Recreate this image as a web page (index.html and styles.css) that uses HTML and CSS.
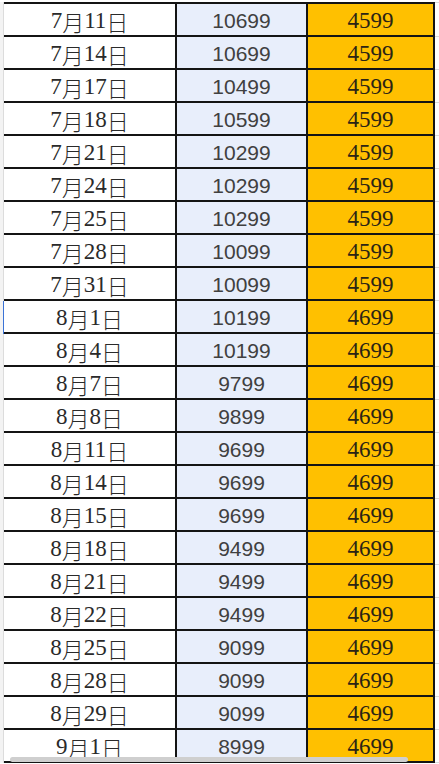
FILE: index.html
```html
<!DOCTYPE html>
<html lang="zh">
<head>
<meta charset="utf-8">
<title>Sheet</title>
<link rel="stylesheet" href="styles.css">
</head>
<body>
<div class="sheet">
  <div class="grid" id="grid"></div>
  <div class="hscroll"></div>
</div>
<script>
const rows = [
["7月11日","10699","4599"],["7月14日","10699","4599"],["7月17日","10499","4599"],
["7月18日","10599","4599"],["7月21日","10299","4599"],["7月24日","10299","4599"],
["7月25日","10299","4599"],["7月28日","10099","4599"],["7月31日","10099","4599"],
["8月1日","10199","4699"],["8月4日","10199","4699"],["8月7日","9799","4699"],
["8月8日","9899","4699"],["8月11日","9699","4699"],["8月14日","9699","4699"],
["8月15日","9699","4699"],["8月18日","9499","4699"],["8月21日","9499","4699"],
["8月22日","9499","4699"],["8月25日","9099","4699"],["8月28日","9099","4699"],
["8月29日","9099","4699"],["9月1日","8999","4699"]];
const g = document.getElementById('grid');
let html = '';
rows.forEach((r, i) => {
  const first = i === 0 ? ' first' : '';
  const sel = i === 9 ? ' sel' : '';
  const d = r[0].replace(/([月日])/g, '<span class="cj">$1</span>');
  html += '<div class="stub' + sel + first + '"></div>';
  html += '<div class="cell date' + first + '">' + d + '</div>';
  html += '<div class="cell price' + first + '">' + r[1] + '</div>';
  html += '<div class="cell fixed' + first + '">' + r[2] + '</div>';
  html += '<div class="edge' + first + '"></div>';
});
g.innerHTML = html;
</script>
</body>
</html>
```
FILE: styles.css
```css
html, body {
  margin: 0;
  padding: 0;
  background: #ffffff;
  overflow: hidden;
}
.sheet {
  position: relative;
  width: 439px;
  height: 764px;
  overflow: hidden;
}
.grid {
  display: grid;
  grid-template-columns: 4px 173px 131px 127px 4px;
  padding-top: 2px;
}
.stub {
  height: 33px;
  box-sizing: border-box;
  background: #f3f3f3;
  border-right: 1px solid #dcdcdc;
}
.stub.first { height: 35px; }
.stub.sel { border-right: 1px solid #3b73d6; }
.edge {
  height: 33px;
  box-sizing: border-box;
  border-bottom: 1px solid #dcdcdc;
}
.edge.first { height: 35px; border-top: 1px solid #dcdcdc; }
.cell {
  height: 33px;
  box-sizing: border-box;
  border-right: 2px solid #141414;
  border-bottom: 2px solid #141414;
  display: flex;
  align-items: center;
  justify-content: center;
  padding-top: 2px;
}
.cell.first {
  height: 35px;
  border-top: 2px solid #141414;
}
.date {
  font-family: "Liberation Serif", "Times New Roman", serif;
  font-size: 23px;
  color: #2a2a2a;
  background: #ffffff;
}
.cj {
  font-family: "Noto Sans CJK SC", "Noto Sans CJK JP", sans-serif;
  font-weight: 300;
  font-size: 22px;
}
.price {
  font-family: "Liberation Sans", Arial, sans-serif;
  font-size: 21px;
  color: #404040;
  background: #e8eefb;
}
.fixed {
  font-family: "Liberation Serif", "Times New Roman", serif;
  font-size: 23px;
  color: #2b2415;
  background: #ffc000;
}
.hscroll {
  position: absolute;
  left: 10px;
  top: 757px;
  width: 398px;
  height: 5px;
  border-radius: 3px;
  background: #cfcfcf;
}
```
